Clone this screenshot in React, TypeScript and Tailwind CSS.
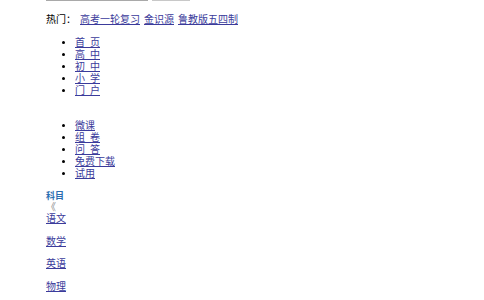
import React from 'react'

const hot = ["高考一轮复习", "金识源", "鲁教版五四制"]
const nav1 = ["首\u2002页", "高\u2002中", "初\u2002中", "小\u2002学", "门\u2002户"]
const nav2 = ["微课", "组\u2002卷", "问\u2002答", "免费下载", "试用"]
const subjects = ["语文", "数学", "英语", "物理"]

const App = () => {
    return (
        <main className="w-[484px] h-[300px] overflow-hidden bg-white pl-[46px] font-['Liberation_Serif','Noto_Sans_CJK_SC',serif] text-[10px] leading-[12px] text-black">
            <div className="flex gap-[4px] -mt-[20px] h-[21px]">
                <div className="w-[102px] h-[21px] border border-[#a9a9a9]" />
                <div className="w-[38px] h-[21px] border border-[#c8c8c8] bg-[#efefef]" />
            </div>
            <div className="mt-[13px] whitespace-nowrap">
                <span className="mr-[4px]">热门：</span>
                {hot.map((h) => (
                    <a key={h} href="#" className="underline text-[#3b3b9b] mr-[4px]">{h}</a>
                ))}
            </div>
            <ul className="list-disc pl-[29px] mt-[11px]">
                {nav1.map((n) => (
                    <li key={n}><a href="#" className="underline text-[#3b3b9b] whitespace-pre">{n}</a></li>
                ))}
            </ul>
            <ul className="list-disc pl-[29px] mt-[23px]">
                {nav2.map((n) => (
                    <li key={n}><a href="#" className="underline text-[#3b3b9b] whitespace-pre">{n}</a></li>
                ))}
            </ul>
            <div className="mt-[11px]">
                <div className="text-[#2a6db0] font-bold text-[9px] leading-[11px]">科目</div>
                <div className="text-[#888] leading-[11px]">《</div>
                {subjects.map((s) => (
                    <p key={s} className="mb-[10.7px]">
                        <a href="#" className="underline text-[#3b3b9b]">{s}</a>
                    </p>
                ))}
            </div>
        </main>
    )
}

export default App
